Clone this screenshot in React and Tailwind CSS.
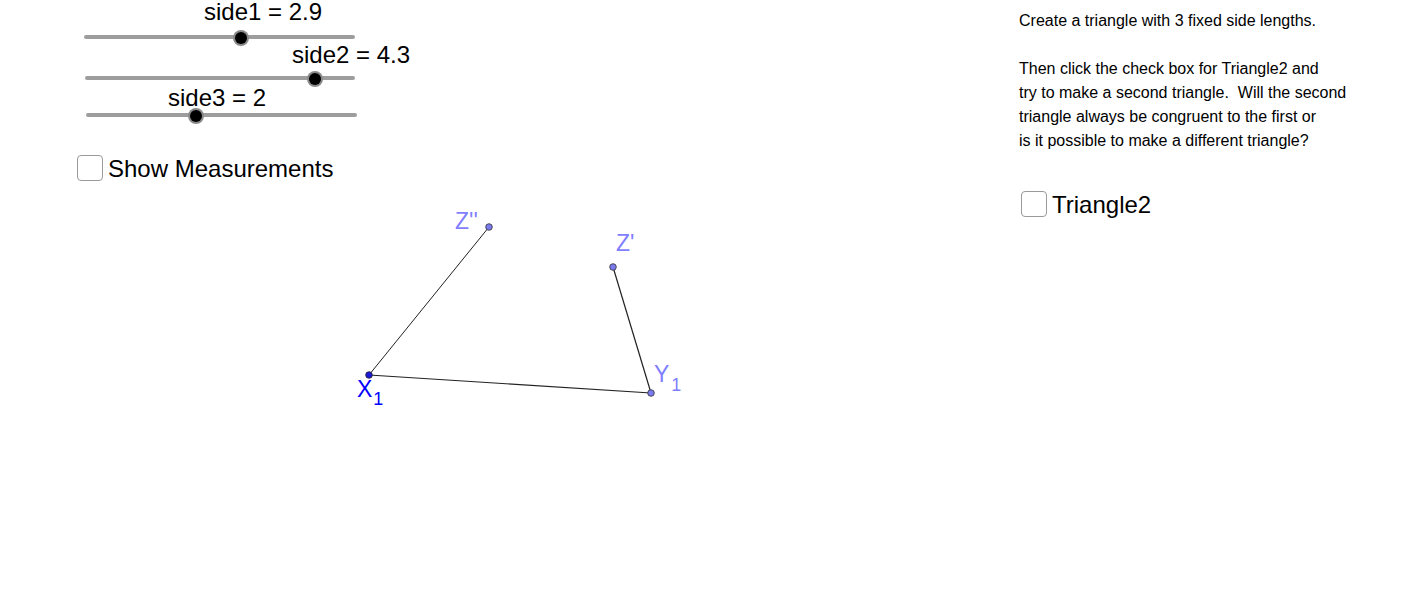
import React from "react";

const SLIDERS = [
  { label: "side1 = 2.9", x1: 86, x2: 353, y: 37, knob: 241, lx: 204, ly: 0 },
  { label: "side2 = 4.3", x1: 87, x2: 353, y: 78, knob: 315, lx: 292, ly: 43 },
  { label: "side3 = 2", x1: 88, x2: 355, y: 115, knob: 196, lx: 168, ly: 86 },
];

function Checkbox({ label }) {
  return (
    <label className="flex items-center gap-[5px] text-[24px] text-black leading-none">
      <span className="w-[26px] h-[26px] rounded-[4px] border-[1.5px] border-[#9a9a9a] bg-white" />
      <span className="pt-[2px]">{label}</span>
    </label>
  );
}

export default function App() {
  return (
    <div
      className="relative w-[1405px] h-[615px] bg-white overflow-hidden"
      style={{ fontFamily: '"Liberation Sans", Arial, sans-serif' }}
    >
      {/* graphics view: sliders and construction */}
      <svg className="absolute inset-0" width="1405" height="615">
        {SLIDERS.map((s) => (
          <g key={s.label}>
            <line x1={s.x1} y1={s.y} x2={s.x2} y2={s.y} stroke="#9d9d9d" strokeWidth="4" strokeLinecap="round" />
            <circle cx={s.knob} cy={s.y + 1} r="8" fill="#8a8a8a" />
            <circle cx={s.knob} cy={s.y + 1} r="6" fill="#000" />
          </g>
        ))}

        <line x1="369" y1="375" x2="489" y2="227" stroke="#222" strokeWidth="1" />
        <line x1="369" y1="375" x2="651" y2="393" stroke="#222" strokeWidth="1.2" />
        <line x1="651" y1="393" x2="613" y2="267" stroke="#222" strokeWidth="1.2" />

        <circle cx="489" cy="227" r="3.3" fill="#7b7bef" stroke="#333" strokeWidth="0.8" />
        <circle cx="613" cy="267" r="3.3" fill="#7b7bef" stroke="#333" strokeWidth="0.8" />
        <circle cx="651" cy="393" r="3.3" fill="#7b7bef" stroke="#333" strokeWidth="0.8" />
        <circle cx="369" cy="375" r="3.3" fill="#1a1ad8" stroke="#222" strokeWidth="0.8" />
      </svg>

      {SLIDERS.map((s) => (
        <div
          key={s.label}
          className="absolute text-[24px] leading-[24px] text-black whitespace-nowrap"
          style={{ left: s.lx, top: s.ly }}
        >
          {s.label}
        </div>
      ))}

      <div className="absolute left-[77px] top-[155px]">
        <Checkbox label="Show Measurements" />
      </div>

      {/* point labels */}
      <div className="absolute left-[455px] top-[210px] text-[23px] leading-none text-[#7f7fff]">Z''</div>
      <div className="absolute left-[616px] top-[232px] text-[23px] leading-none text-[#7f7fff]">Z'</div>
      <div className="absolute left-[654px] top-[363px] text-[23px] leading-none text-[#7f7fff] whitespace-nowrap">
        Y<span className="text-[18px] relative top-[9px] ml-[2px]">1</span>
      </div>
      <div className="absolute left-[357px] top-[378px] text-[23px] leading-none text-[#0000ff] whitespace-nowrap">
        X<span className="text-[18px] relative top-[8px] ml-[1px]">1</span>
      </div>

      {/* instructions */}
      <div className="absolute left-[1019px] top-[9px] flex flex-col gap-[38px]">
        <div className="text-[16px] leading-[24px] text-black">
          <p>Create a triangle with 3 fixed side lengths.</p>
          <p>&nbsp;</p>
          <p>Then click the check box for Triangle2 and</p>
          <p className="whitespace-pre">try to make a second triangle.  Will the second</p>
          <p>triangle always be congruent to the first or</p>
          <p>is it possible to make a different triangle?</p>
        </div>
        <div className="ml-[2px]">
          <Checkbox label="Triangle2" />
        </div>
      </div>
    </div>
  );
}
